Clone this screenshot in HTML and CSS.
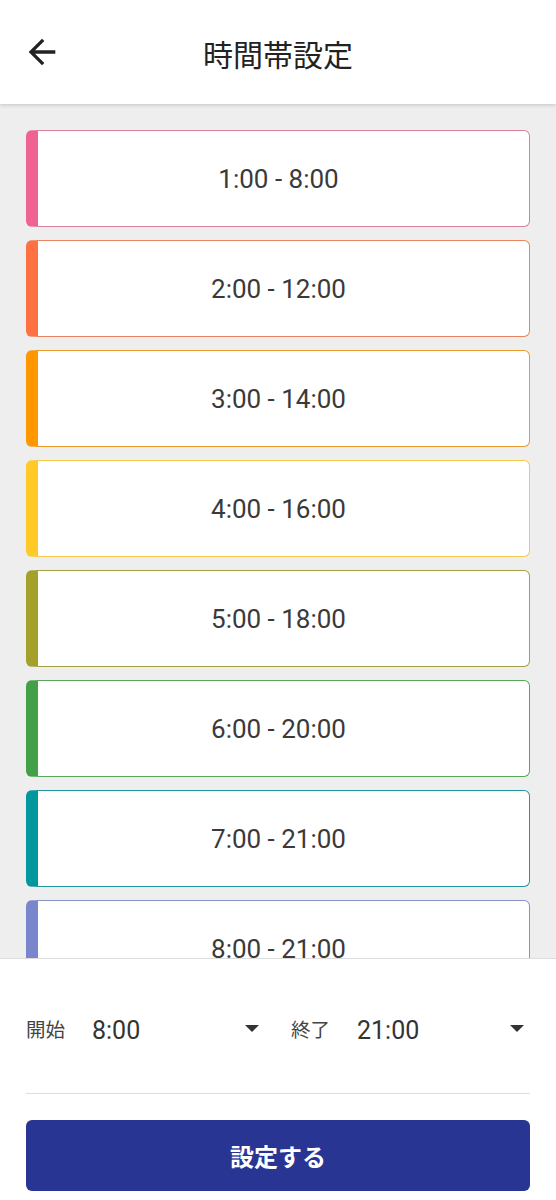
FILE: index.html
```html
<!DOCTYPE html>
<html>
<head>
  <title>時間帯設定</title>
  <meta charset="UTF-8">
  <meta name="viewport" content="width=device-width, initial-scale=1.0">
  <link rel="stylesheet" href="styles.css">
</head>
<body>
  <div class="app">
    <header class="topbar">
      <button class="back" aria-label="戻る">
        <svg viewBox="0 0 24 24" width="40" height="40">
          <path d="M20 11H7.83l5.59-5.59L12 4l-8 8 8 8 1.41-1.41L7.83 13H20v-2z" fill="#222"/>
        </svg>
      </button>
      <h1 class="title">時間帯設定</h1>
    </header>

    <main class="list">
      <div class="slot c1">1:00 - 8:00</div>
      <div class="slot c2">2:00 - 12:00</div>
      <div class="slot c3">3:00 - 14:00</div>
      <div class="slot c4">4:00 - 16:00</div>
      <div class="slot c5">5:00 - 18:00</div>
      <div class="slot c6">6:00 - 20:00</div>
      <div class="slot c7">7:00 - 21:00</div>
      <div class="slot c8">8:00 - 21:00</div>
    </main>

    <footer class="panel">
      <div class="range">
        <div class="picker">
          <span class="picker-label">開始</span>
          <span class="picker-value">8:00</span>
          <span class="caret"></span>
        </div>
        <div class="picker">
          <span class="picker-label">終了</span>
          <span class="picker-value">21:00</span>
          <span class="caret"></span>
        </div>
      </div>
      <button class="submit">設定する</button>
    </footer>
  </div>
</body>
</html>
```

FILE: styles.css
```css
* {
  box-sizing: border-box;
}
html, body {
  margin: 0;
  padding: 0;
}
body {
  font-family: Roboto, "Noto Sans CJK JP", sans-serif;
  color: #333;
  background: #eeeeee;
}
.app {
  height: 1200px;
  display: flex;
  flex-direction: column;
  overflow: hidden;
}
.topbar {
  position: relative;
  z-index: 2;
  height: 104px;
  flex: none;
  background: #fff;
  display: flex;
  align-items: center;
  justify-content: center;
  box-shadow: 0 1px 4px rgba(0, 0, 0, 0.18);
}
.back {
  position: absolute;
  left: 22px;
  top: 32px;
  padding: 0;
  border: none;
  background: none;
  width: 40px;
  height: 40px;
}
.back svg {
  display: block;
}
.title {
  margin: 2px 0 0;
  font-family: "Noto Sans CJK JP", sans-serif;
  font-weight: 400;
  font-size: 30px;
  color: #222;
}
.list {
  flex: 1;
  overflow: hidden;
  padding: 26px 26px 0;
  display: flex;
  flex-direction: column;
  gap: 13px;
}
.slot {
  flex: none;
  height: 97px;
  background: #fff;
  border: 1.5px solid;
  border-left-width: 12px;
  border-radius: 6px;
  display: flex;
  align-items: center;
  justify-content: center;
  font-size: 26px;
  color: #3a3a3a;
  padding-right: 10px;
}
.c1 { border-color: #d6819c; border-left-color: #f06292; }
.c2 { border-color: #e8845f; border-left-color: #ff7043; }
.c3 { border-color: #e89a2a; border-left-color: #ff9800; }
.c4 { border-color: #f5c94a; border-left-color: #ffca28; }
.c5 { border-color: #a3a142; border-left-color: #a4a12b; }
.c6 { border-color: #58a65b; border-left-color: #43a047; }
.c7 { border-color: #1f969c; border-left-color: #00979f; }
.c8 { border-color: #8a92c4; border-left-color: #7986cb; }

.panel {
  position: relative;
  z-index: 2;
  flex: none;
  height: 242px;
  background: #fff;
  border-top: 1px solid #dcdcdc;
  padding: 0 26px;
}
.range {
  height: 135px;
  padding-top: 9px;
  display: grid;
  grid-template-columns: 1fr 1fr;
  column-gap: 26px;
  align-items: center;
  border-bottom: 1.5px solid #dddddd;
}
.picker {
  display: flex;
  align-items: center;
  padding-right: 6px;
}
.picker-label {
  font-family: "Noto Sans CJK JP", sans-serif;
  font-size: 19.5px;
  color: #444;
  margin-top: -4px;
  width: 66px;
}
.picker-value {
  flex: 1;
  font-size: 25px;
  color: #333;
}
.caret {
  width: 0;
  height: 0;
  border-left: 7px solid transparent;
  border-right: 7px solid transparent;
  border-top: 7px solid #333;
  margin-top: -4px;
}
.submit {
  display: block;
  width: 100%;
  height: 71px;
  margin-top: 26px;
  border: none;
  border-radius: 6px;
  background: #283593;
  color: #fff;
  font-family: "Noto Sans CJK JP", sans-serif;
  font-weight: 700;
  font-size: 24px;
}
```
